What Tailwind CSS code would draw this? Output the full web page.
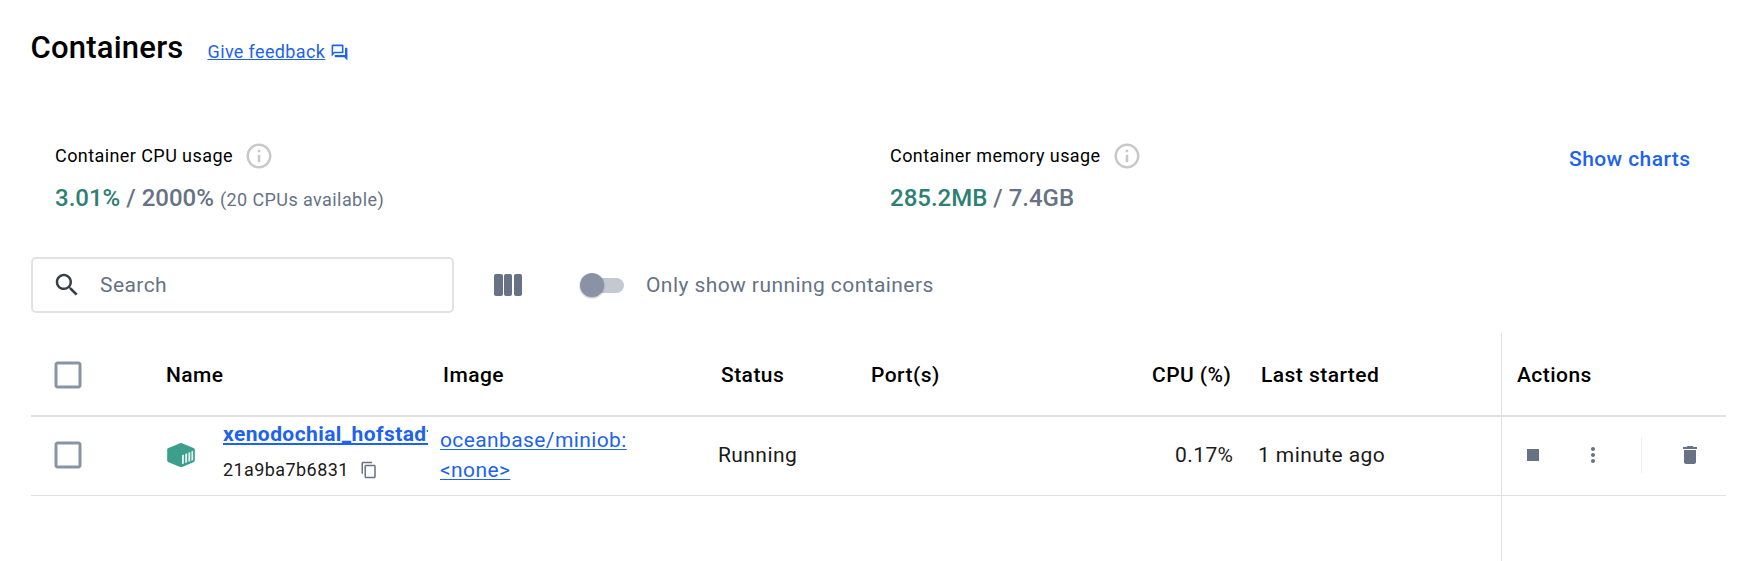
<!DOCTYPE html>
<html lang="en">
<head>
<meta charset="utf-8">
<title>Containers</title>
<script src="https://cdn.jsdelivr.net/npm/@tailwindcss/browser@4"></script>
</head>
<body class="bg-white font-[Roboto,sans-serif] text-[21px] tracking-[0.42px] text-black">
<main class="flex h-[561px] w-[1759px] flex-col overflow-hidden pl-[31px] pr-[33px]">

  <header class="flex h-[134px] items-start">
    <h1 class="-ml-[0.500px] mt-[29px] text-[31px] leading-[37px] font-medium tracking-[0.22px]">Containers</h1>
    <a class="mt-[39px] ml-[24px] flex items-center text-[18px] leading-[26px] tracking-[0.37px] text-[#1d63ed]">
      <span class="underline underline-offset-[1px] decoration-1">Give feedback</span>
      <svg class="ml-[5px] size-[19px]" viewBox="0 0 24 24" fill="currentColor"><path d="M15 4v7H5.170L4 12.170V4h11m1-2H3c-.55 0-1 .45-1 1v14l4-4h10c.55 0 1-.45 1-1V3c0-.55-.45-1-1-1zm5 4h-2v9H6v2c0 .55.45 1 1 1h11l4 4V7c0-.55-.45-1-1-1z"/></svg>
    </a>
  </header>

  <section class="flex h-[123px] items-start pl-[24px]">
    <div class="w-[835px]">
      <div class="mt-[7px] flex h-[30px] items-center text-[18px]"><span class="mb-[2px]">Container CPU usage</span>
        <svg class="ml-[11px] size-[30px]" viewBox="0 0 24 24" fill="#c8c8c8"><path d="M11 7h2v2h-2zm0 4h2v6h-2zm1-9C6.480 2 2 6.480 2 12s4.480 10 10 10 10-4.480 10-10S17.520 2 12 2zm0 18c-4.410 0-8-3.590-8-8s3.590-8 8-8 8 3.590 8 8-3.590 8-8 8z"/></svg>
      </div>
      <div class="mt-[9px] flex items-baseline gap-[6px] text-[24px] leading-[36px] font-medium tracking-normal text-[#677285]"><span class="text-[#2e7f74]">3.01%</span><span>/</span><span>2000%</span><span class="text-[18px] font-normal tracking-[0.42px]">(20 CPUs available)</span></div>
    </div>
    <div class="w-[679px]">
      <div class="mt-[7px] flex h-[30px] items-center text-[18px]"><span class="mb-[2px]">Container memory usage</span>
        <svg class="ml-[11px] size-[30px]" viewBox="0 0 24 24" fill="#c8c8c8"><path d="M11 7h2v2h-2zm0 4h2v6h-2zm1-9C6.480 2 2 6.480 2 12s4.480 10 10 10 10-4.480 10-10S17.520 2 12 2zm0 18c-4.410 0-8-3.590-8-8s3.590-8 8-8 8 3.590 8 8-3.590 8-8 8z"/></svg>
      </div>
      <div class="mt-[9px] text-[24px] leading-[36px] font-medium tracking-normal text-[#677285]"><span class="text-[#2e7f74]">285.2MB</span> / 7.4GB</div>
    </div>
    <button class="mt-[9px] leading-[32px] font-medium tracking-[0.42px] text-[#1d63ed]">Show charts</button>
  </section>

  <section class="flex h-[56px] shrink-0 items-center">
    <div class="flex h-[56px] w-[423px] items-center rounded-[5px] border-2 border-[#e1e2e6] pl-[19px]">
      <svg class="size-[30px]" viewBox="0 0 24 24" fill="#393f49"><path d="M15.500 14h-.79l-.28-.27C15.410 12.590 16 11.110 16 9.500 16 5.910 13.090 3 9.500 3S3 5.910 3 9.500 5.910 16 9.500 16c1.610 0 3.090-.59 4.230-1.570l.27.28v.79l5 4.990L20.490 19l-4.990-5zm-6 0C7.010 14 5 11.990 5 9.500S7.010 5 9.500 5 14 7.010 14 9.500 11.990 14 9.500 14z"/></svg>
      <span class="mt-[2px] ml-[18px] text-[#677285]">Search</span>
    </div>
    <div class="ml-[40px] flex h-[22px] w-[28px] gap-[1.250px]">
      <i class="flex-1 rounded-[2px] bg-[#677285]"></i><i class="flex-1 rounded-[2px] bg-[#677285]"></i><i class="flex-1 rounded-[2px] bg-[#677285]"></i>
    </div>
    <div class="ml-[58px] flex w-[44px] items-center">
      <div class="z-10 size-[24px] shrink-0 rounded-full bg-[#8993a5] shadow-[0_1px_2px_rgba(0,0,0,0.3)]"></div>
      <div class="-ml-[20px] h-[15px] w-[40px] rounded-full bg-[#c4c8d1]"></div>
    </div>
    <span class="mt-[2px] ml-[22px] text-[#677285]">Only show running containers</span>
  </section>

  <section class="mt-[20px] flex h-[228px] shrink-0">
    <div class="w-[1471px] border-r border-[#e0e0e0]">
      <div class="grid h-[84px] grid-cols-[135px_277px_278px_150px_281px_80px_240px] items-center border-b-2 border-[#e0e0e0] pt-[3px] font-medium tracking-[0.45px]">
        <svg class="-mt-[1px] ml-[19px] size-[36px]" viewBox="0 0 24 24" fill="#8993a5"><path d="M19 5v14H5V5h14m0-2H5c-1.100 0-2 .9-2 2v14c0 1.100.9 2 2 2h14c1.100 0 2-.9 2-2V5c0-1.100-.9-2-2-2z"/></svg>
        <span>Name</span><span>Image</span><span>Status</span><span>Port(s)</span><span class="whitespace-nowrap">CPU (%)</span><span class="ml-[29px]">Last started</span>
      </div>
      <div class="grid h-[79px] grid-cols-[135px_57px_217px_278px_400px_138px_240px] items-center border-b border-[#e0e0e0]">
        <svg class="-mt-[2px] ml-[19px] size-[36px]" viewBox="0 0 24 24" fill="#8993a5"><path d="M19 5v14H5V5h14m0-2H5c-1.100 0-2 .9-2 2v14c0 1.100.9 2 2 2h14c1.100 0 2-.9 2-2V5c0-1.100-.9-2-2-2z"/></svg>
        <svg class="-mt-[2px] ml-[1px] h-[24px] w-[28px]" viewBox="0 0 28 24"><path d="M13 .3q1-.5 2 0l12 5q.8.4.8 1.300v11q0 .9-.8 1.300l-12 5q-1 .4-2 0l-12-5Q.2 18.500.2 17.600v-11Q.2 5.700 1 5.300Z" fill="#3b9f8c"/><g fill="#e9f5f3"><path d="M15 12.200l1.900-.6v8.800l-1.900.8zM18.200 10.900l1.900-.7v9l-1.900.7zM21.400 9.700l1.800-.7v9.200l-1.800.6zM24.400 8.500l1.700-.7v9.400l-1.700.6z"/></g></svg>
        <div class="mb-[9px] flex flex-col">
          <a class="w-[205px] overflow-hidden whitespace-nowrap leading-[32px] font-bold text-[#1d63ed] underline decoration-[1.500px] underline-offset-[2px]">xenodochial_hofstadter</a>
          <div class="mt-[4px] flex h-[32px] items-center text-[18px] text-[#1a1a1a]">21a9ba7b6831
            <svg class="ml-[11px] size-[18px]" viewBox="0 0 24 24" fill="#677285"><path d="M16 1H4c-1.100 0-2 .9-2 2v14h2V3h12V1zm3 4H8c-1.100 0-2 .9-2 2v14c0 1.100.9 2 2 2h11c1.100 0 2-.9 2-2V7c0-1.100-.9-2-2-2zm0 16H8V7h11v14z"/></svg>
          </div>
        </div>
        <a class="mb-[2px] leading-[30px] tracking-[0.39px] text-[#1d63ed] underline decoration-1 underline-offset-[2px]">oceanbase/miniob:<br>&lt;none&gt;</a>
        <span class="text-[#1a1a1a]">Running</span>
        <span class="ml-[57px] text-[#1a1a1a]">0.17%</span>
        <span class="ml-[2px] text-[#1a1a1a]">1 minute ago</span>
      </div>
    </div>
    <div class="flex-1">
      <div class="flex h-[84px] items-center border-b-2 border-[#e0e0e0] pt-[3px] pl-[15px] font-medium tracking-[0.45px]">Actions</div>
      <div class="flex h-[79px] items-center border-b border-[#e0e0e0] pb-[2px] pl-[25px]">
        <i class="size-[12px] bg-[#677285]"></i>
        <svg class="ml-[42px] size-[24px]" viewBox="0 0 24 24" fill="#677285"><path d="M12 8c1.100 0 2-.9 2-2s-.9-2-2-2-2 .9-2 2 .9 2 2 2zm0 2c-1.100 0-2 .9-2 2s.9 2 2 2 2-.9 2-2-.9-2-2-2zm0 6c-1.100 0-2 .9-2 2s.9 2 2 2 2-.9 2-2-.9-2-2-2z"/></svg>
        <i class="ml-[36px] h-[36px] w-px bg-[#eeeeee]"></i>
        <svg class="ml-[36px] size-[24px]" viewBox="0 0 24 24" fill="#677285"><path d="M6 19c0 1.100.9 2 2 2h8c1.100 0 2-.9 2-2V7H6v12zM19 4h-3.500l-1-1h-5l-1 1H5v2h14V4z"/></svg>
      </div>
    </div>
  </section>
</main>
</body>
</html>
